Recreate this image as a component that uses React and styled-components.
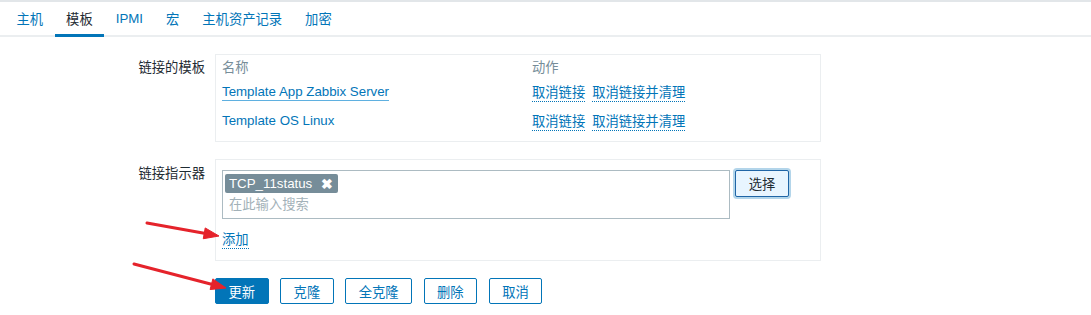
import styled, { createGlobalStyle, css } from "styled-components";

const GlobalStyle = createGlobalStyle`
  html, body {
    margin: 0;
    padding: 0;
    background: #ffffff;
  }
  body {
    font-family: "Liberation Sans", "Noto Sans CJK SC", sans-serif;
    font-size: 13.3px;
    color: #1f2c33;
  }
`;

const Page = styled.div`
  position: relative;
  width: 1091px;
  height: 315px;
  overflow: hidden;
  border-top: 2px solid #e2e6e9;
  box-sizing: border-box;
`;

const TabBar = styled.ul`
  display: flex;
  margin: 0;
  padding: 0 0 0 5px;
  list-style: none;
  height: 33px;
  border-bottom: 2px solid #ebeef0;
`;

const Tab = styled.li`
  display: flex;
  align-items: center;
  padding: 0 11.5px;
  color: #0275b8;
  cursor: pointer;
  ${({ $active }) =>
    $active &&
    css`
      color: #1f2c33;
      box-shadow: inset 0 -3px 0 #0275b8;
      margin-bottom: -2px;
      padding-bottom: 2px;
    `}
`;

const Form = styled.div`
  display: grid;
  grid-template-columns: 205px 606px;
  column-gap: 10px;
  row-gap: 17px;
  padding-top: 17px;
`;

const Label = styled.div`
  text-align: right;
  line-height: 18px;
  padding-top: ${({ $top }) => $top || 5}px;
`;

const Box = styled.div`
  border: 1px solid #ebeef0;
  padding: 0 6px 6px;
`;

const Table = styled.table`
  border-collapse: collapse;
  width: 100%;

  th {
    height: 22px;
    padding: 0;
    text-align: left;
    font-weight: normal;
    color: #768d99;
    vertical-align: middle;
  }
  td {
    height: 29px;
    padding: 0;
    vertical-align: middle;
  }
`;

const NameCell = styled.td`
  width: 310px;
`;

const Link = styled.a`
  color: #0275b8;
  text-decoration: none;
  padding-bottom: 1px;
  border-bottom: 1px
    ${({ $line }) =>
      $line === "dotted"
        ? "dotted #0275b8"
        : $line === "solid"
        ? "solid #5fb0e0"
        : "solid transparent"};
  cursor: pointer;
  & + & {
    margin-left: 7px;
  }
`;

const PickerRow = styled.div`
  display: flex;
  align-items: flex-start;
  gap: 5px;
  padding-top: 10px;
`;

const MultiSelect = styled.div`
  width: 508px;
  height: 49px;
  box-sizing: border-box;
  border: 1px solid #acbbc2;
  padding: 3px 2px;
  display: flex;
  flex-direction: column;
  gap: 3px;
`;

const TagChip = styled.span`
  align-self: flex-start;
  display: inline-flex;
  align-items: center;
  gap: 9px;
  height: 19px;
  padding: 0 5px 0 4px;
  border-radius: 2px;
  background: #768d99;
  color: #ffffff;
`;

const ChipClose = styled.span`
  font-size: 14px;
  font-weight: bold;
  line-height: 1;
`;

const Placeholder = styled.span`
  padding-left: 4px;
  color: #a2b1b8;
  line-height: 18px;
`;

const SelectButton = styled.button`
  width: 54px;
  height: 27px;
  border: 1px solid #1f65a6;
  border-radius: 2px;
  background: #e8f5ff;
  box-shadow: 0 0 0 2px rgba(2, 117, 184, 0.3);
  color: #1f2c33;
  font: inherit;
  padding: 0;
`;

const AddRow = styled.div`
  padding-top: 12px;
  line-height: 18px;
  padding-bottom: 5px;
`;

const Buttons = styled.div`
  grid-column: 2;
  display: flex;
  gap: 11.5px;
`;

const Button = styled.button`
  height: 26px;
  padding: 0 12.5px;
  border: 1px solid #0275b8;
  border-radius: 2px;
  background: ${({ $primary }) => ($primary ? "#0275b8" : "#ffffff")};
  color: ${({ $primary }) => ($primary ? "#ffffff" : "#0275b8")};
  font: inherit;
  cursor: pointer;
`;

const Annotations = styled.svg`
  position: absolute;
  left: 0;
  top: 0;
  pointer-events: none;
`;

const tabs = ["主机", "模板", "IPMI", "宏", "主机资产记录", "加密"];

const templates = ["Template App Zabbix Server", "Template OS Linux"];

function Arrow({ x1, y1, x2, y2 }) {
  const angle = Math.atan2(y2 - y1, x2 - x1);
  const len = 15;
  const half = 5.5;
  const bx = x2 - len * Math.cos(angle);
  const by = y2 - len * Math.sin(angle);
  const px = -Math.sin(angle) * half;
  const py = Math.cos(angle) * half;
  return (
    <g fill="#e5232b" stroke="#e5232b">
      <line x1={x1} y1={y1} x2={bx} y2={by} strokeWidth="3" strokeLinecap="round" />
      <polygon
        points={`${x2},${y2} ${bx + px},${by + py} ${bx - px},${by - py}`}
        strokeWidth="1"
        strokeLinejoin="round"
      />
    </g>
  );
}

export default function App() {
  return (
    <>
      <GlobalStyle />
      <Page>
        <TabBar>
          {tabs.map((t) => (
            <Tab key={t} $active={t === "模板"}>
              {t}
            </Tab>
          ))}
        </TabBar>

        <Form>
          <Label>链接的模板</Label>
          <Box>
            <Table>
              <thead>
                <tr>
                  <th>名称</th>
                  <th>动作</th>
                </tr>
              </thead>
              <tbody>
                {templates.map((name, i) => (
                  <tr key={name}>
                    <NameCell>
                      <Link $line={i === 0 ? "solid" : "none"}>{name}</Link>
                    </NameCell>
                    <td>
                      <Link $line="dotted">取消链接</Link>
                      <Link $line="dotted">取消链接并清理</Link>
                    </td>
                  </tr>
                ))}
              </tbody>
            </Table>
          </Box>

          <Label $top={6}>链接指示器</Label>
          <Box>
            <PickerRow>
              <MultiSelect>
                <TagChip>
                  TCP_11status
                  <ChipClose>✖</ChipClose>
                </TagChip>
                <Placeholder>在此输入搜索</Placeholder>
              </MultiSelect>
              <SelectButton>选择</SelectButton>
            </PickerRow>
            <AddRow>
              <Link $line="dotted">添加</Link>
            </AddRow>
          </Box>

          <Buttons>
            <Button $primary>更新</Button>
            <Button>克隆</Button>
            <Button>全克隆</Button>
            <Button>删除</Button>
            <Button>取消</Button>
          </Buttons>
        </Form>

        <Annotations width="1091" height="315">
          <Arrow x1={147} y1={221} x2={219} y2={234} />
          <Arrow x1={134} y1={262} x2={226} y2={286} />
        </Annotations>
      </Page>
    </>
  );
}
